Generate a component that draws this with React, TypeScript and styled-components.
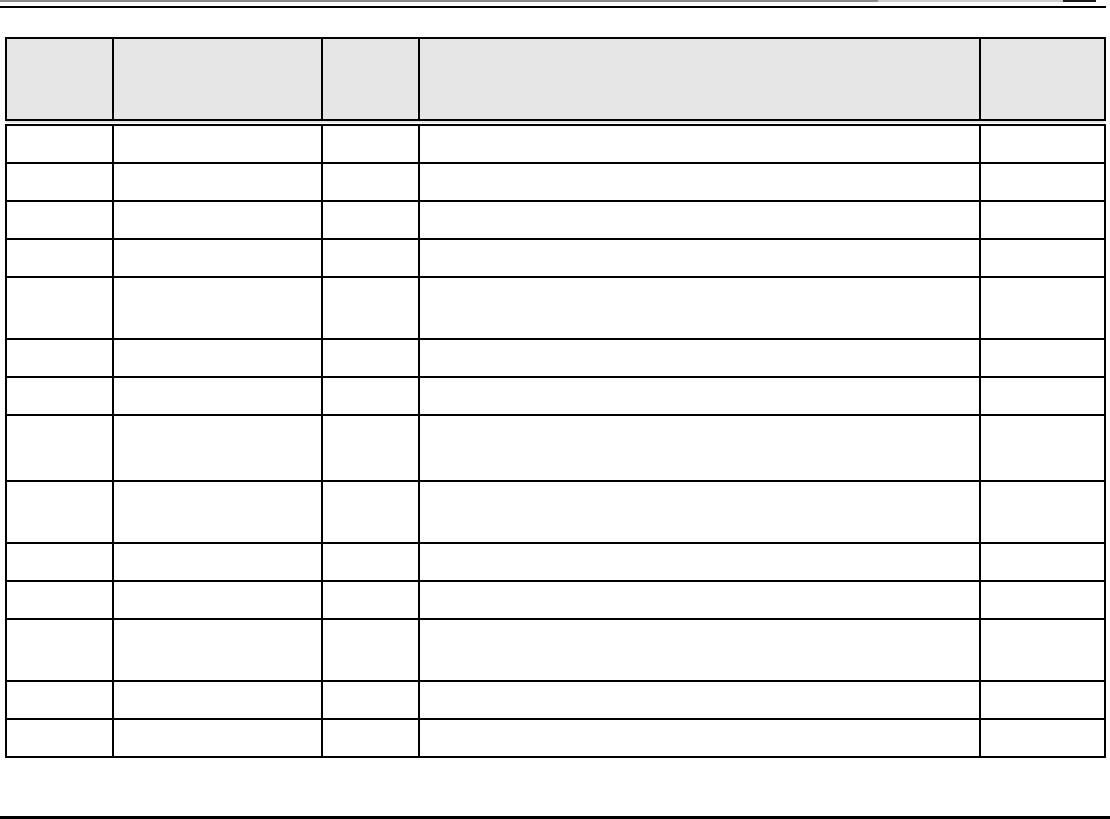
import * as React from "react"
import styled, { createGlobalStyle } from "styled-components"

const GlobalStyle = createGlobalStyle`
  html, body {
    margin: 0;
    padding: 0;
    background: #ffffff;
    font-family: "Liberation Sans", Arial, sans-serif;
  }
`

const Page = styled.div`
  width: 1110px;
  height: 819px;
  display: flex;
  flex-direction: column;
  overflow: hidden;
`

const TopStrip = styled.div`
  display: flex;
  height: 2px;
`

const StripPart = styled.div<{ width: number; tone: string }>`
  width: ${({ width }) => width}px;
  background: ${({ tone }) => tone};
`

const Rule = styled.div<{ width: number; thickness: number; gap: number }>`
  width: ${({ width }) => width}px;
  height: ${({ thickness }) => thickness}px;
  margin-top: ${({ gap }) => gap}px;
  background: #000000;
  flex-shrink: 0;
`

const Grid = styled.table`
  margin: 29px 0 0 5px;
  width: 1099px;
  border-collapse: collapse;
  table-layout: fixed;
`

const HeadCell = styled.th`
  background: #e6e6e6;
  border: 2px solid #000000;
  border-bottom: 7px double #000000;
  height: 80px;
  padding: 0;
`

const Cell = styled.td`
  border: 2px solid #000000;
  padding: 0;
`

const Row = styled.tr<{ tall?: number }>`
  height: ${({ tall }) => tall}px;
`

const columns = [107, 209, 97, 561, 125]
const rows = [40, 38, 38, 38, 62, 38, 38, 66, 62, 38, 38, 62, 38, 38]

const App = () => {
  return (
    <Page>
      <GlobalStyle />
      <TopStrip>
        <StripPart width={878} tone="#8c8c8c" />
        <StripPart width={185} tone="#cfcfcf" />
        <StripPart width={33} tone="#1a1a1a" />
      </TopStrip>
      <Rule width={1106} thickness={2} gap={4} />
      <Grid>
        <colgroup>
          {columns.map((w, i) => (
            <col key={i} style={{ width: w }} />
          ))}
        </colgroup>
        <thead>
          <tr>
            {columns.map((_, i) => (
              <HeadCell key={i} />
            ))}
          </tr>
        </thead>
        <tbody>
          {rows.map((h, r) => (
            <Row key={r} tall={h}>
              {columns.map((_, c) => (
                <Cell key={c} />
              ))}
            </Row>
          ))}
        </tbody>
      </Grid>
      <Rule width={1110} thickness={3} gap={58} />
    </Page>
  )
}

export default App
